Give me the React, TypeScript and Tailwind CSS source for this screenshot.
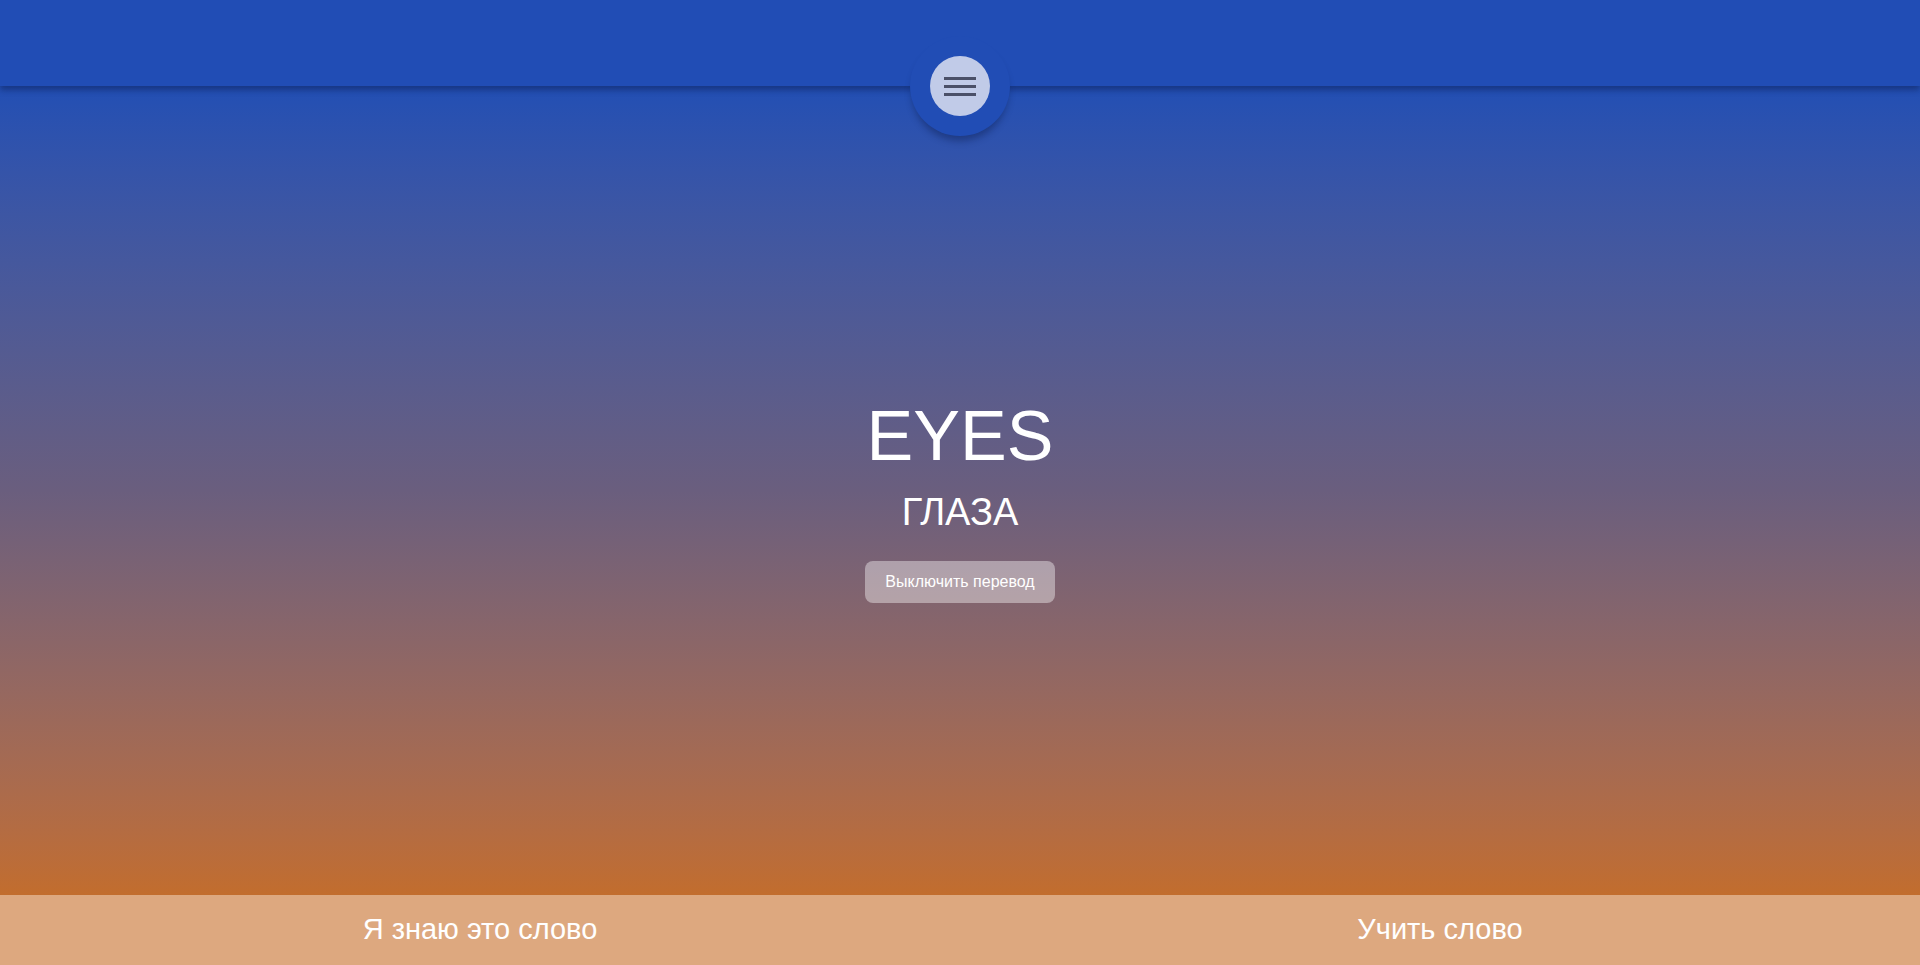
export default function App() {
  return (
    <div className="flex h-screen w-full flex-col overflow-hidden font-['Liberation_Sans',Arial,sans-serif]">
      <header className="relative z-10 h-[86px] shrink-0 bg-[#214db5] shadow-[0_4px_6px_rgba(10,25,70,0.45)]">
        <div className="absolute left-1/2 top-[36px] flex h-[100px] w-[100px] -translate-x-1/2 items-center justify-center rounded-full bg-[#214db5] shadow-[0_7px_7px_-2px_rgba(10,25,70,0.4)]">
          <button className="flex h-[60px] w-[60px] flex-col items-center justify-center gap-[5px] rounded-full bg-[#c1cbe8]">
            <span className="h-[3px] w-[32px] bg-[#4b5068]" />
            <span className="h-[3px] w-[32px] bg-[#4b5068]" />
            <span className="h-[3px] w-[32px] bg-[#4b5068]" />
          </button>
        </div>
      </header>

      <main className="flex flex-1 flex-col items-center justify-center bg-gradient-to-b from-[#224fb4] via-[#6a5e7e] to-[#c26d2d] pt-[22px] text-white">
        <h1 className="text-[70px] leading-none">EYES</h1>
        <p className="mt-[22px] text-[38px] leading-none">ГЛАЗА</p>
        <button className="mt-[30px] h-[42px] w-[190px] rounded-lg bg-white/40 text-[16px] text-white">
          Выключить перевод
        </button>
      </main>

      <footer className="grid h-[70px] shrink-0 grid-cols-2 bg-[#dda87f] text-[29px] text-white">
        <button className="flex items-center justify-center">Я знаю это слово</button>
        <button className="flex items-center justify-center">Учить слово</button>
      </footer>
    </div>
  )
}
